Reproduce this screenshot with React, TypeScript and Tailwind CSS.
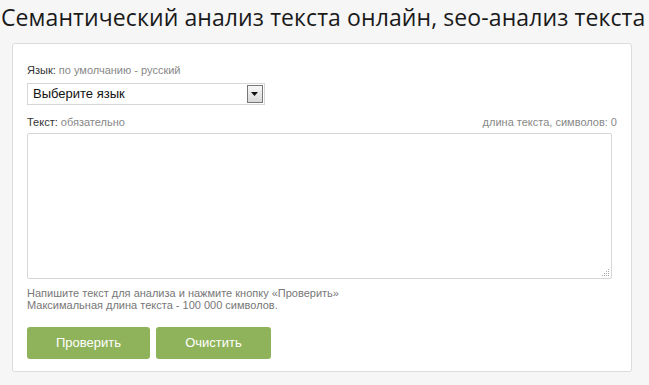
export default function App() {
  return (
    <div className="w-[649px] h-[385px] bg-[#f6f6f6] overflow-hidden font-['Liberation_Sans',sans-serif]">
      <h1 className="h-[43px] pl-[1px] pt-[2px] text-[23px] leading-[30px] tracking-[0.1px] text-[#1a1a1a] whitespace-nowrap font-['Open_Sans',sans-serif]">
        Семантический анализ текста онлайн, seo-анализ текста
      </h1>
      <div className="ml-[12px] w-[620px] h-[329px] bg-white border border-[#dcdcdc] rounded-[3px] px-[14px] pt-[19px]">
        <div className="text-[11px] leading-[14px] h-[20px]">
          <span className="text-[#333]">Язык:</span>{" "}
          <span className="text-[#888]">по умолчанию - русский</span>
        </div>
        <div className="w-[238px] h-[22px] border border-[#d6d6d6] flex items-center justify-between">
          <span className="pl-[5px] text-[13px] text-[#111]">Выберите язык</span>
          <div className="w-[16px] h-[18px] mr-[1px] border border-[#777] bg-gradient-to-b from-[#f8f8f8] to-[#d8d8d8] flex items-center justify-center">
            <svg width="8" height="4" viewBox="0 0 8 4">
              <path d="M0 0h7l-3.5 4z" fill="#111" />
            </svg>
          </div>
        </div>
        <div className="mt-[10px] h-[17px] flex justify-between text-[11px] leading-[14px]">
          <div>
            <span className="text-[#333]">Текст:</span>{" "}
            <span className="text-[#888]">обязательно</span>
          </div>
          <span className="text-[#888]">длина текста, символов: 0</span>
        </div>
        <div className="relative mt-[1px] w-[585px] h-[146px]">
          <textarea className="block w-full h-full border border-[#d6d6d6] rounded-[2px] outline-none resize-none" />
          <svg className="absolute right-[3px] bottom-[3px]" width="7" height="7" viewBox="0 0 7 7">
            <g fill="#aaa">
              <rect x="6" y="0" width="1" height="1" />
              <rect x="4" y="2" width="1" height="1" />
              <rect x="6" y="2" width="1" height="1" />
              <rect x="2" y="4" width="1" height="1" />
              <rect x="4" y="4" width="1" height="1" />
              <rect x="6" y="4" width="1" height="1" />
              <rect x="0" y="6" width="1" height="1" />
              <rect x="2" y="6" width="1" height="1" />
              <rect x="4" y="6" width="1" height="1" />
              <rect x="6" y="6" width="1" height="1" />
            </g>
          </svg>
        </div>
        <div className="mt-[8px] text-[11px] leading-[12px] text-[#777]">
          <p>Напишите текст для анализа и нажмите кнопку «Проверить»</p>
          <p>Максимальная длина текста - 100 000 символов.</p>
        </div>
        <div className="mt-[16px] flex gap-[6px]">
          <button className="w-[123px] h-[32px] rounded-[3px] bg-[#8fb35a] text-white text-[13px]">
            Проверить
          </button>
          <button className="w-[115px] h-[32px] rounded-[3px] bg-[#8fb35a] text-white text-[13px]">
            Очистить
          </button>
        </div>
      </div>
    </div>
  )
}
